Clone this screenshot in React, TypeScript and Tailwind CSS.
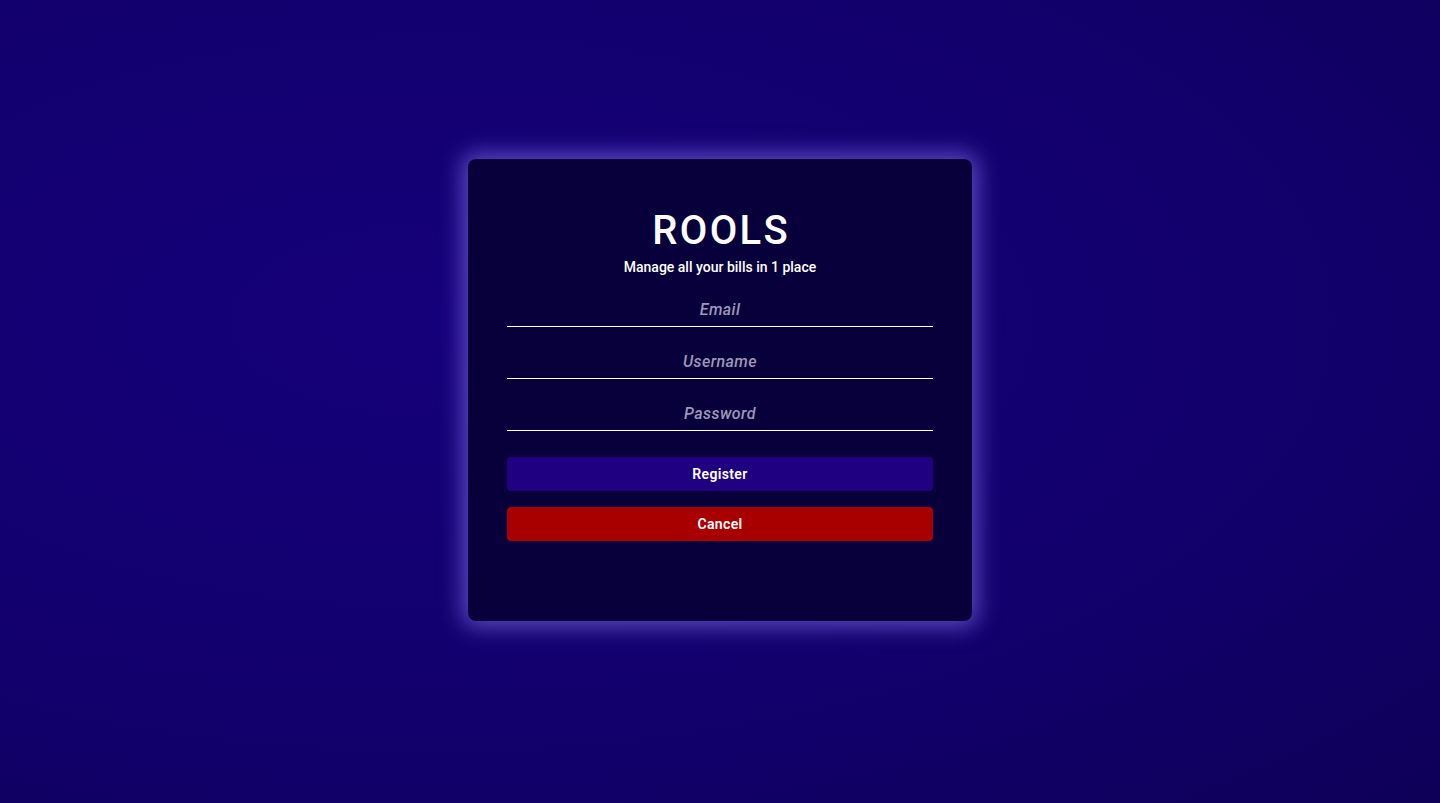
import React from 'react';

const fields = ['Email', 'Username', 'Password'];

const App: React.FC = () => {
  return (
    <div
      className="min-h-screen w-full flex items-center justify-center pb-[24px] bg-[radial-gradient(ellipse_at_30%_40%,#15007a_0%,#12006c_60%,#0e0058_100%)]"
      style={{ fontFamily: 'Roboto, "Liberation Sans", sans-serif' }}
    >
      <div className="w-[504px] h-[462px] rounded-lg bg-[#08003a] shadow-[0_0_22px_6px_rgba(150,130,255,0.55)] px-[39px] pt-[48px]">
        <h1 className="text-center text-white text-[40px] leading-[48px] font-medium tracking-[0.06em] pl-[0.06em]">
          ROOLS
        </h1>
        <p className="text-center text-white text-sm font-medium mt-[2px]">Manage all your bills in 1 place</p>

        <form className="mt-[16px] flex flex-col gap-[18px]" onSubmit={(e) => e.preventDefault()}>
          {fields.map((f) => (
            <input
              key={f}
              type={f === 'Password' ? 'password' : 'text'}
              placeholder={f}
              className="h-[34px] w-full bg-transparent border-b border-white text-center text-white italic font-medium text-base tracking-wide placeholder:text-[#9d97b8] outline-none"
            />
          ))}

          <div className="mt-[8px] flex flex-col gap-[16px]">
            <button
              type="submit"
              className="h-[34px] w-full rounded bg-[#1f0080] text-white text-sm font-semibold tracking-wide"
            >
              Register
            </button>
            <button type="button" className="h-[34px] w-full rounded bg-[#a80000] text-white text-sm font-semibold tracking-wide">
              Cancel
            </button>
          </div>
        </form>
      </div>
    </div>
  );
};

export default App;
